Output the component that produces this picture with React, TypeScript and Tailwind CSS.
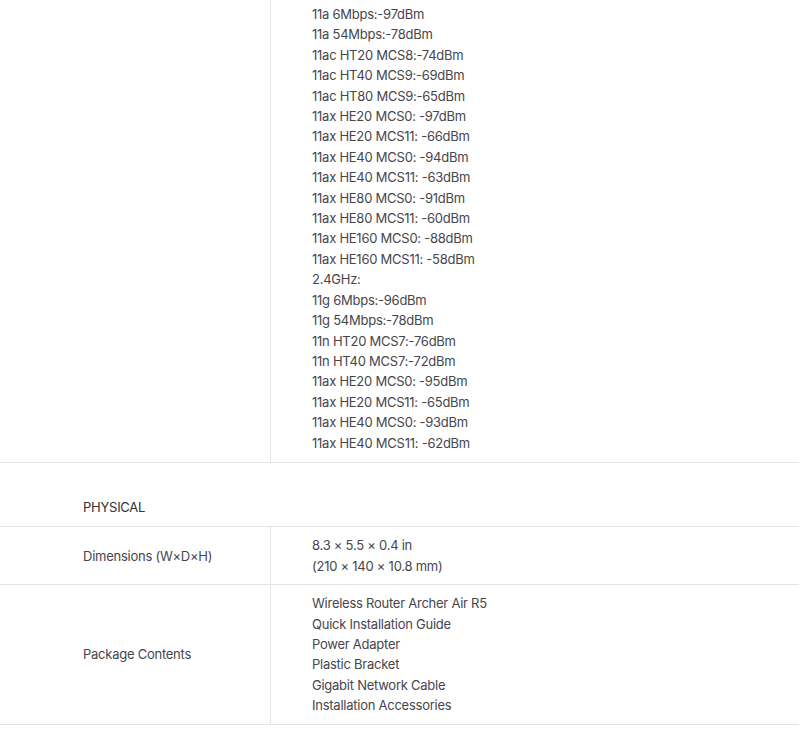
const receive = [
  "11a 6Mbps:-97dBm",
  "11a 54Mbps:-78dBm",
  "11ac HT20 MCS8:-74dBm",
  "11ac HT40 MCS9:-69dBm",
  "11ac HT80 MCS9:-65dBm",
  "11ax HE20 MCS0: -97dBm",
  "11ax HE20 MCS11: -66dBm",
  "11ax HE40 MCS0: -94dBm",
  "11ax HE40 MCS11: -63dBm",
  "11ax HE80 MCS0: -91dBm",
  "11ax HE80 MCS11: -60dBm",
  "11ax HE160 MCS0: -88dBm",
  "11ax HE160 MCS11: -58dBm",
  "2.4GHz:",
  "11g 6Mbps:-96dBm",
  "11g 54Mbps:-78dBm",
  "11n HT20 MCS7:-76dBm",
  "11n HT40 MCS7:-72dBm",
  "11ax HE20 MCS0: -95dBm",
  "11ax HE20 MCS11: -65dBm",
  "11ax HE40 MCS0: -93dBm",
  "11ax HE40 MCS11: -62dBm",
];

const physical = [
  { label: "Dimensions (W×D×H)", values: ["8.3 × 5.5 × 0.4 in", "(210 × 140 × 10.8 mm)"] },
  {
    label: "Package Contents",
    values: [
      "Wireless Router Archer Air R5",
      "Quick Installation Guide",
      "Power Adapter",
      "Plastic Bracket",
      "Gigabit Network Cable",
      "Installation Accessories",
    ],
  },
];

function Row({ label, values }: { label: string; values: string[] }) {
  return (
    <div className="flex border-b border-[#e4e4ea]">
      <div className="w-[271px] shrink-0 border-r border-[#e4e4ea] pl-[83px] flex items-center">
        {label}
      </div>
      <div className="flex-1 pl-[41px] pt-2 pb-2">
        {values.map((v) => (
          <div key={v}>{v}</div>
        ))}
      </div>
    </div>
  );
}

export default function App() {
  return (
    <div
      className="w-[799px] bg-white text-[13px] leading-[20.4px] tracking-[-0.25px] text-[#46464c]"
      style={{ fontFamily: "Inter, 'Liberation Sans', sans-serif" }}
    >
      <div className="flex border-b border-[#e4e4ea]">
        <div className="w-[271px] shrink-0 border-r border-[#e4e4ea]" />
        <div className="flex-1 pl-[41px] pt-[4px] pb-[9px]">
          {receive.map((v) => (
            <div key={v}>{v}</div>
          ))}
        </div>
      </div>

      <div className="pl-[83px] pt-[34px] pb-[9px] border-b border-[#e4e4ea] text-[#333338]">PHYSICAL</div>

      {physical.map((r) => (
        <Row key={r.label} label={r.label} values={r.values} />
      ))}
    </div>
  );
}
